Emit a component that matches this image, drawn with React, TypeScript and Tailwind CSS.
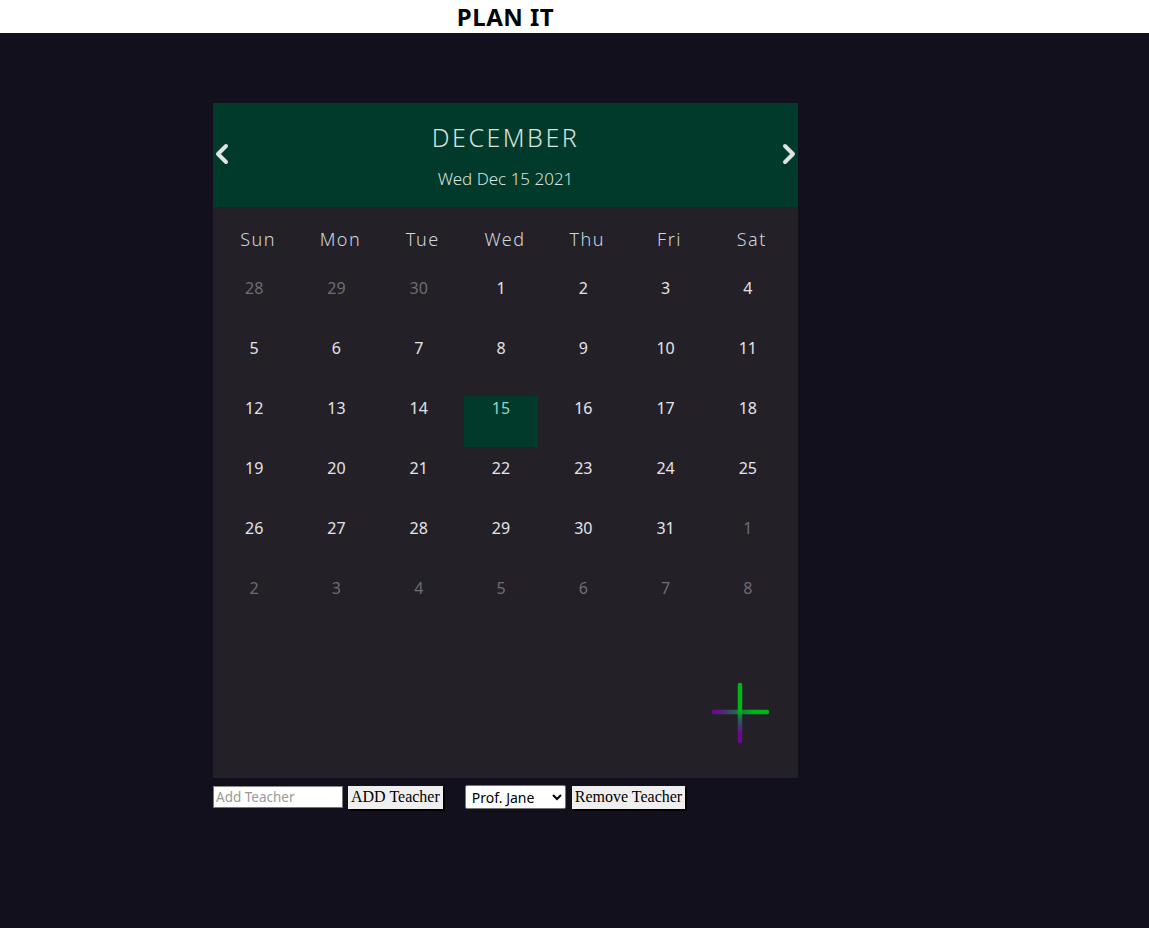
import React from "react";

const font = { fontFamily: '"Noto Sans", "Open Sans", sans-serif' };

type Cell = { d: number; cur: boolean; sel?: boolean };

const rows: Cell[][] = [
  [
    { d: 28, cur: false },
    { d: 29, cur: false },
    { d: 30, cur: false },
    { d: 1, cur: true },
    { d: 2, cur: true },
    { d: 3, cur: true },
    { d: 4, cur: true },
  ],
  [5, 6, 7, 8, 9, 10, 11].map((d) => ({ d, cur: true })),
  [12, 13, 14, 15, 16, 17, 18].map((d) => ({ d, cur: true, sel: d === 15 })),
  [19, 20, 21, 22, 23, 24, 25].map((d) => ({ d, cur: true })),
  [
    ...[26, 27, 28, 29, 30, 31].map((d) => ({ d, cur: true })),
    { d: 1, cur: false },
  ],
  [2, 3, 4, 5, 6, 7, 8].map((d) => ({ d, cur: false })),
];

const days = ["Sun", "Mon", "Tue", "Wed", "Thu", "Fri", "Sat"];

export default function App() {
  return (
    <div className="min-h-[928px] bg-[#13101e]" style={font}>
      <div className="h-[33px] bg-white flex items-center">
        <div className="ml-[213px] w-[585px] text-center text-[24px] font-bold text-black leading-none tracking-[0.5px]">
          PLAN IT
        </div>
      </div>
      <div className="ml-[213px] mt-[70px] w-[585px]">
        <div className="h-[675px] bg-[#232028] flex flex-col">
          <div className="h-[104px] bg-[#01392b] relative flex flex-col items-center">
            <div className="mt-[19px] text-[25px] leading-[30px] tracking-[2.5px] text-[#d7e3de] font-light">
              DECEMBER
            </div>
            <div className="mt-[15px] text-[17px] leading-[24px] text-[#d7e3de] font-light">
              Wed Dec 15 2021
            </div>
            <svg
              className="absolute top-[40px]"
              style={{ left: 1 }}
              width="16"
              height="22"
              viewBox="0 0 16 22"
            >
              <path
                d="M12 3 L4 11 L12 19"
                stroke="#dfe3e2"
                strokeWidth="4"
                fill="none"
                strokeLinecap="round"
                strokeLinejoin="round"
              />
            </svg>
            <svg
              className="absolute top-[40px]"
              style={{ right: 1 }}
              width="16"
              height="22"
              viewBox="0 0 16 22"
            >
              <path
                d="M4 3 L12 11 L4 19"
                stroke="#dfe3e2"
                strokeWidth="4"
                fill="none"
                strokeLinecap="round"
                strokeLinejoin="round"
              />
            </svg>
          </div>
          <div className="w-[576px] ml-[4px] grid grid-cols-7 mt-[20px]">
            {days.map((d) => (
              <div
                key={d}
                className="text-center text-[18px] leading-[24px] tracking-[1.5px] text-[#cfd6de] font-light"
              >
                {d}
              </div>
            ))}
          </div>
          <div className="w-[576px] grid grid-cols-7 mt-[25px] gap-y-[9px]">
            {rows.flat().map((c, i) => (
              <div key={i} className="flex justify-center">
                <div
                  className={`w-[74px] h-[51px] text-center pt-[1px] text-[16px] leading-[22px] ${
                    c.sel ? "bg-[#01392b] text-[#8fd6d0]" : ""
                  } ${c.cur ? (c.sel ? "" : "text-[#e4e4e8]") : "text-[#6f6c74]"}`}
                >
                  {c.d}
                </div>
              </div>
            ))}
          </div>
          <div className="flex-1 relative">
            <svg
              className="absolute left-[497px] top-[55px]"
              width="60"
              height="62"
              viewBox="0 0 60 62"
            >
              <defs>
                <linearGradient id="gv" gradientUnits="userSpaceOnUse" x1="0" y1="3" x2="0" y2="59">
                  <stop offset="0.45" stopColor="#00b515" />
                  <stop offset="0.65" stopColor="#2a5560" />
                  <stop offset="0.85" stopColor="#6a0a8a" />
                </linearGradient>
                <linearGradient id="gh" gradientUnits="userSpaceOnUse" x1="3" y1="0" x2="56" y2="0">
                  <stop offset="0.05" stopColor="#6a0a8a" />
                  <stop offset="0.45" stopColor="#1f6a52" />
                  <stop offset="0.75" stopColor="#00b515" />
                </linearGradient>
              </defs>
              <line x1="4" y1="30" x2="57" y2="30" stroke="url(#gh)" strokeWidth="4.5" strokeLinecap="round" />
              <line x1="30" y1="3" x2="30" y2="59" stroke="url(#gv)" strokeWidth="4.5" strokeLinecap="round" />
            </svg>
          </div>
        </div>
        <div className="flex items-center mt-[7px] h-[24px]">
          <input
            placeholder="Add Teacher"
            className="w-[130px] h-[22px] bg-white text-[13.5px] px-[2px] placeholder:text-[#9a9a9a] border border-[#767676] border-t-[#8a8a8a] outline-none"
            style={font}
          />
          <button
            className="ml-[5px] h-[23px] px-[3px] bg-[#efefef] text-black text-[16px] leading-[20px] shadow-[2px_2px_0_#000]"
            style={{ fontFamily: '"Liberation Serif", serif' }}
          >
            ADD Teacher
          </button>
          <select
            className="ml-[22px] w-[101px] h-[24px] bg-white text-[14px] text-black border border-[#767676] rounded-[2px] px-[2px]"
            style={font}
            defaultValue="jane"
          >
            <option value="jane">Prof. Jane</option>
          </select>
          <button
            className="ml-[6px] h-[23px] px-[3px] bg-[#efefef] text-black text-[16px] leading-[20px] shadow-[2px_2px_0_#000]"
            style={{ fontFamily: '"Liberation Serif", serif' }}
          >
            Remove Teacher
          </button>
        </div>
      </div>
    </div>
  );
}
